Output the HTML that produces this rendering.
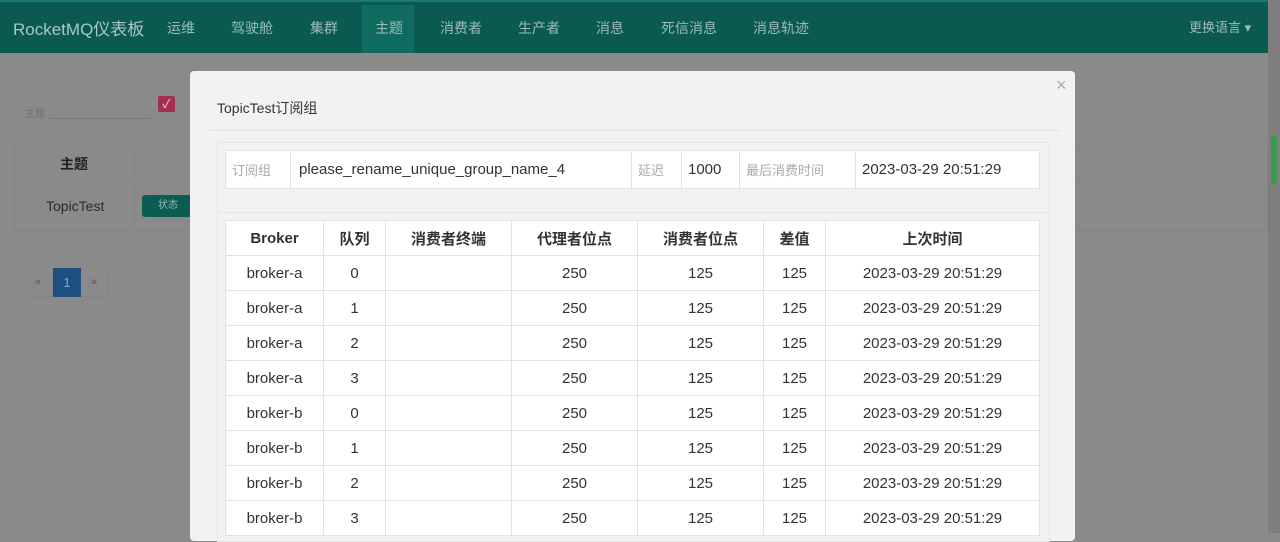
<!DOCTYPE html>
<html><head><meta charset="utf-8"><style>
*{box-sizing:border-box;margin:0;padding:0}
body{width:1280px;height:533px;overflow:hidden;background:#8a8a8a;font-family:"Liberation Sans","Noto Sans CJK SC",sans-serif;position:relative;color:#333}
.a{position:absolute}
.nav{left:0;top:0;width:1268px;height:53px;background:#0a5a51;border-top:2px solid #1a7a70}
.nav span{position:absolute;top:16px;color:#9bbcb6;font-size:14px}
.sb{left:1268px;top:0;width:12px;height:533px;background:#7e7e7e}
.modal{left:190px;top:71px;width:885px;height:470px;background:#f2f2f2;border-radius:4px}
table{border-collapse:collapse;position:absolute}
td{border:1px solid #e2e2e2;background:#fff;text-align:center;font-size:15px;color:#333;height:35px}
th{border:1px solid #e2e2e2;background:#fff;font-size:15px;font-weight:bold;height:35px}
</style></head><body>
<div class="a nav">
<span style="left:13px;top:13px;font-size:17px;color:#a9c7c2">RocketMQ仪表板</span>
<div class="a" style="left:362px;top:3px;width:52px;height:48px;background:#0f6a60"></div>
<span style="left:167px">运维</span><span style="left:231px">驾驶舱</span><span style="left:310px">集群</span><span style="left:375px">主题</span><span style="left:440px">消费者</span><span style="left:518px">生产者</span><span style="left:596px">消息</span><span style="left:661px">死信消息</span><span style="left:753px">消息轨迹</span><span style="left:1189px;top:15px;font-size:13px">更换语言 ▾</span>
</div>
<div class="a sb"><div class="a" style="left:3px;top:135px;width:6px;height:50px;background:#3a9a4a;border-radius:3px"></div></div>
<span class="a" style="left:25px;top:105px;font-size:10px;color:#6e6e6e">主题</span>
<div class="a" style="left:50px;top:118px;width:100px;border-top:1px solid #777"></div>
<div class="a" style="left:158px;top:96px;width:17px;height:16px;background:#a33050;border-radius:2px;color:#ddd;font-size:12px;text-align:center;line-height:16px">✓</div>
<div class="a" style="left:14px;top:145px;width:1254px;height:87px;border:1px solid #848484"></div>
<div class="a" style="left:14px;top:180px;width:1254px;border-top:1px solid #848484"></div>
<div class="a" style="left:134px;top:145px;height:87px;border-left:1px solid #848484"></div>
<span class="a" style="left:60px;top:154px;font-size:14px;font-weight:bold;color:#222">主题</span>
<span class="a" style="left:46px;top:198px;font-size:14px;color:#2a2a2a">TopicTest</span>
<div class="a" style="left:142px;top:195px;width:50px;height:22px;background:#0b5d54;border-radius:3px;color:#9bbcb6;font-size:10px;line-height:22px;padding-left:16px">状态</div>
<div class="a" style="left:26px;top:268px;width:82px;height:29px;border:1px solid #848484"></div>
<span class="a" style="left:35px;top:276px;font-size:11px;color:#555">«</span>
<div class="a" style="left:53px;top:268px;width:28px;height:29px;background:#1f4f80;color:#7fa4cc;font-size:13px;text-align:center;line-height:29px">1</div>
<span class="a" style="left:91px;top:276px;font-size:11px;color:#555">»</span>
<div class="a modal">
<span class="a" style="left:866px;top:4px;font-size:18px;color:#aaa">×</span>
<span class="a" style="left:27px;top:27px;font-size:14px;color:#333">TopicTest订阅组</span>
<div class="a" style="left:20px;top:59px;width:850px;border-top:1px solid #e3e3e3"></div>
<div class="a" style="left:27px;top:71px;width:833px;height:400px;border:1px solid #e6e6e6"></div>
<div class="a" style="left:27px;top:141px;width:833px;border-top:1px solid #e6e6e6"></div>
<table style="left:35px;top:79px;width:815px">
<tr style="height:38px"><td style="width:65px;color:#aaa;text-align:left;padding-left:6px;font-size:13px">订阅组</td><td style="width:341px;text-align:left;padding-left:8px">please_rename_unique_group_name_4</td><td style="width:50px;color:#aaa;font-size:13px;text-align:left;padding-left:6px">延迟</td><td style="width:58px;text-align:left;padding-left:6px">1000</td><td style="width:116px;color:#aaa;font-size:13px;text-align:left;padding-left:6px">最后消费时间</td><td style="text-align:left;padding-left:6px">2023-03-29 20:51:29</td></tr>
</table>
<table style="left:35px;top:149px;width:815px">
<tr><th style="width:98px">Broker</th><th style="width:62px">队列</th><th style="width:126px">消费者终端</th><th style="width:126px">代理者位点</th><th style="width:126px">消费者位点</th><th style="width:62px">差值</th><th>上次时间</th></tr>
<tr><td>broker-a</td><td>0</td><td></td><td>250</td><td>125</td><td>125</td><td>2023-03-29 20:51:29</td></tr>
<tr><td>broker-a</td><td>1</td><td></td><td>250</td><td>125</td><td>125</td><td>2023-03-29 20:51:29</td></tr>
<tr><td>broker-a</td><td>2</td><td></td><td>250</td><td>125</td><td>125</td><td>2023-03-29 20:51:29</td></tr>
<tr><td>broker-a</td><td>3</td><td></td><td>250</td><td>125</td><td>125</td><td>2023-03-29 20:51:29</td></tr>
<tr><td>broker-b</td><td>0</td><td></td><td>250</td><td>125</td><td>125</td><td>2023-03-29 20:51:29</td></tr>
<tr><td>broker-b</td><td>1</td><td></td><td>250</td><td>125</td><td>125</td><td>2023-03-29 20:51:29</td></tr>
<tr><td>broker-b</td><td>2</td><td></td><td>250</td><td>125</td><td>125</td><td>2023-03-29 20:51:29</td></tr>
<tr><td>broker-b</td><td>3</td><td></td><td>250</td><td>125</td><td>125</td><td>2023-03-29 20:51:29</td></tr>
</table>
</div>
</body></html>
